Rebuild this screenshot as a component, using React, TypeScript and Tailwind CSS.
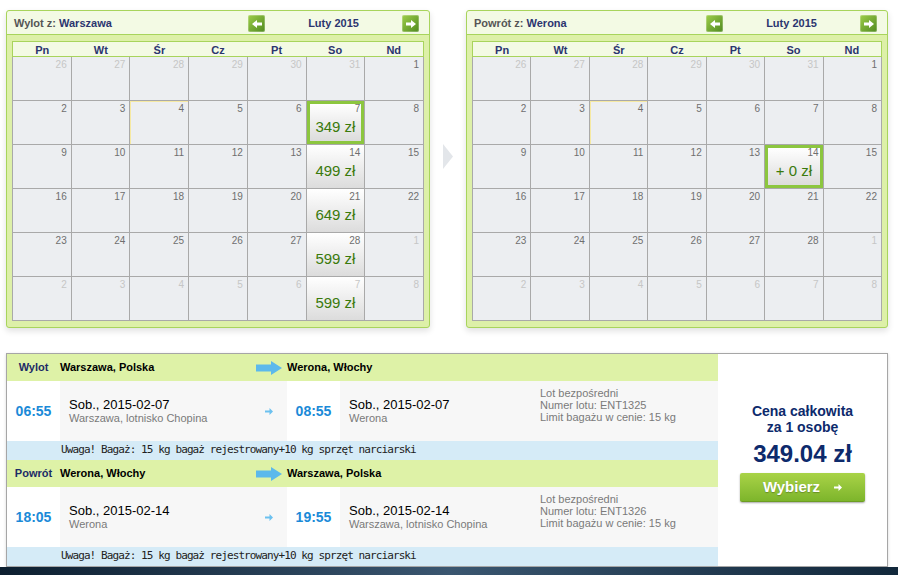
import React from "react";

type Cell = { p?: string; sel?: boolean };

const weeks = [
  [26, 27, 28, 29, 30, 31, 1],
  [2, 3, 4, 5, 6, 7, 8],
  [9, 10, 11, 12, 13, 14, 15],
  [16, 17, 18, 19, 20, 21, 22],
  [23, 24, 25, 26, 27, 28, 1],
  [2, 3, 4, 5, 6, 7, 8],
];

const dayNames = ["Pn", "Wt", "Śr", "Cz", "Pt", "So", "Nd"];

const isOther = (r: number, c: number) => (r === 0 && c < 6) || (r === 4 && c === 6) || r === 5;

function NavButton({ dir }: { dir: "l" | "r" }) {
  return (
    <div className="flex h-[17px] w-[17px] items-center justify-center rounded-[2px] bg-gradient-to-br from-[#9fcf4a] to-[#4f8a1f] shadow-[inset_0_0_0_1px_rgba(255,255,255,0.25)]">
      <svg width="10" height="8" viewBox="0 0 10 8" className={dir === "r" ? "" : "rotate-180"}>
        <path d="M0 2.6h5V0l5 4-5 4V5.4H0z" fill="#fff" />
      </svg>
    </div>
  );
}

function Calendar({
  label,
  city,
  width,
  cells,
}: {
  label: string;
  city: string;
  width: string;
  cells: Record<string, Cell>;
}) {
  return (
    <div className={`${width} h-[318px] rounded-[3px] border border-[#a8d45c] bg-[#ddf0a8] shadow-[0_3px_6px_rgba(0,0,0,0.12)]`}>
      <div className="flex h-[24px] items-center border-b border-[#a8d45c] bg-[#f3fae4] rounded-t-[3px] pt-[2px]">
        <div className="flex-1 pl-[7px] text-[11px] font-bold text-[#555]">
          {label} <span className="text-[#2b356f]">{city}</span>
        </div>
        <div className="mr-[10px] flex w-[171px] items-center">
          <NavButton dir="l" />
          <div className="flex-1 text-center text-[11px] font-bold text-[#2b356f]">Luty 2015</div>
          <NavButton dir="r" />
        </div>
      </div>
      <div className="mx-[5px] mt-[6px]">
        <div className="grid h-[16px] grid-cols-7 items-center border border-[#a8d45c] bg-[#f3fae4]">
          {dayNames.map((d) => (
            <div key={d} className="text-center text-[11px] font-bold text-[#2b356f]">
              {d}
            </div>
          ))}
        </div>
        <div className="grid grid-cols-7 gap-px border-x border-b border-[#a9a9a9] bg-[#a9a9a9]">
          {weeks.map((w, r) =>
            w.map((d, c) => {
              const cell = cells[`${r}-${c}`];
              const other = isOther(r, c);
              const today = r === 1 && c === 2;
              return (
                <div
                  key={`${r}-${c}`}
                  className={`h-[43px] ${
                    cell
                      ? `bg-gradient-to-b from-white to-[#dcdcdc] ${cell.sel ? "border-[3px] border-[#8cc63f]" : ""}`
                      : "bg-[#eceef1]"
                  } ${today ? "shadow-[inset_1px_1px_0_#f6e9a2]" : ""}`}
                >
                  <div
                    className={`pr-[4px] pt-[2px] text-right text-[10px] leading-[12px] ${
                      other ? "text-[#c6c6c6]" : "text-[#6f6f6f]"
                    } ${cell?.sel ? "-mt-[3px] -mr-[3px]" : ""}`}
                  >
                    {d}
                  </div>
                  {cell && (
                    <div className="mt-[3px] text-center text-[15px] leading-[18px] text-[#3a7a0c]">{cell.p}</div>
                  )}
                </div>
              );
            })
          )}
        </div>
      </div>
    </div>
  );
}

function BigArrow() {
  return (
    <svg width="26" height="14" viewBox="0 0 26 14">
      <path d="M0 3.5h15V0l11 7-11 7v-3.5H0z" fill="#5cb9eb" />
    </svg>
  );
}

function SmallArrow() {
  return (
    <svg width="8" height="7" viewBox="0 0 8 7">
      <path d="M0 2.5h4.5V0L8 3.5 4.5 7V4.5H0z" fill="#6cc1ef" />
    </svg>
  );
}

function Leg({
  kind,
  from,
  to,
  dep,
  arr,
  date,
  fromLoc,
  toLoc,
  flight,
}: {
  kind: string;
  from: string;
  to: string;
  dep: string;
  arr: string;
  date: string;
  fromLoc: string;
  toLoc: string;
  flight: string;
}) {
  return (
    <>
      <div className="flex h-[27px] items-center bg-[#def2a7] text-[11px] font-bold">
        <div className="w-[53px] text-center text-[#1c2c66]">{kind}</div>
        <div className="flex w-[227px] items-center justify-between pr-[5px] text-black">
          <span>{from}</span>
          <BigArrow />
        </div>
        <div className="text-black">{to}</div>
      </div>
      <div className="flex h-[60px]">
        <div className="flex w-[53px] items-center justify-center bg-white text-[14px] font-bold text-[#1b8ad8]">{dep}</div>
        <div className="flex w-[227px] items-center justify-between bg-[#f7f7f7] pl-[9px] pr-[14px]">
          <div>
            <div className="text-[13px] leading-[15px] text-black">{date}</div>
            <div className="text-[11px] leading-[13px] text-[#7a7a7a]">{fromLoc}</div>
          </div>
          <SmallArrow />
        </div>
        <div className="flex w-[53px] items-center justify-center bg-white text-[14px] font-bold text-[#1b8ad8]">{arr}</div>
        <div className="flex flex-1 bg-[#f7f7f7] pl-[9px]">
          <div className="flex w-[191px] flex-col justify-center">
            <div className="text-[13px] leading-[15px] text-black">{date}</div>
            <div className="text-[11px] leading-[13px] text-[#7a7a7a]">{toLoc}</div>
          </div>
          <div className="pt-[6px] text-[11px] leading-[12px] text-[#7a7a7a]">
            <div>Lot bezpośredni</div>
            <div>Numer lotu: {flight}</div>
            <div>Limit bagażu w cenie: 15 kg</div>
          </div>
        </div>
      </div>
      <div className="flex h-[19px] items-center bg-[#d5ebf7] pl-[54px] font-['DejaVu_Sans_Mono',monospace] text-[11px] tracking-[-0.9px] text-[#222]">
        Uwaga! Bagaż: 15 kg bagaż rejestrowany+10 kg sprzęt narciarski
      </div>
    </>
  );
}

export default function App() {
  return (
    <div className="relative h-[575px] w-[898px] overflow-hidden bg-white font-['Liberation_Sans',Arial,sans-serif]">
      <div className="flex pl-[6px] pt-[10px]">
        <Calendar
          label="Wylot z:"
          city="Warszawa"
          width="w-[424px]"
          cells={{
            "1-5": { p: "349 zł", sel: true },
            "2-5": { p: "499 zł" },
            "3-5": { p: "649 zł" },
            "4-5": { p: "599 zł" },
            "5-5": { p: "599 zł" },
          }}
        />
        <div className="flex w-[36px] items-center justify-center pb-[26px]">
          <svg width="10" height="25" viewBox="0 0 10 25">
            <path d="M0 0l10 12.5L0 25z" fill="#e3e6ea" />
          </svg>
        </div>
        <Calendar
          label="Powrót z:"
          city="Werona"
          width="w-[422px]"
          cells={{ "2-5": { p: "+ 0 zł", sel: true } }}
        />
      </div>

      <div className="ml-[6px] mt-[25px] flex h-[214px] w-[882px] border border-[#a6a6a6] shadow-[0_1px_3px_rgba(0,0,0,0.15)]">
        <div className="flex w-[711px] flex-col">
          <Leg
            kind="Wylot"
            from="Warszawa, Polska"
            to="Werona, Włochy"
            dep="06:55"
            arr="08:55"
            date="Sob., 2015-02-07"
            fromLoc="Warszawa, lotnisko Chopina"
            toLoc="Werona"
            flight="ENT1325"
          />
          <Leg
            kind="Powrót"
            from="Werona, Włochy"
            to="Warszawa, Polska"
            dep="18:05"
            arr="19:55"
            date="Sob., 2015-02-14"
            fromLoc="Werona"
            toLoc="Warszawa, lotnisko Chopina"
            flight="ENT1326"
          />
        </div>
        <div className="flex flex-1 flex-col items-center bg-white pt-[49px]">
          <div className="text-center text-[14px] font-bold leading-[16px] text-[#0d2a6c]">
            <div>Cena całkowita</div>
            <div>za 1 osobę</div>
          </div>
          <div className="mt-[6px] text-[24px] font-bold leading-[26px] text-[#0d2a6c]">349.04 zł</div>
          <div className="mt-[6px] flex h-[29px] w-[125px] items-center justify-center gap-[14px] rounded-[2px] border-b border-[#6c9d22] bg-gradient-to-b from-[#a9d347] to-[#7db52b] shadow-[0_1px_2px_rgba(0,0,0,0.35)]">
            <span className="text-[15px] font-bold text-white [text-shadow:0_1px_1px_rgba(0,0,0,0.25)]">Wybierz</span>
            <svg width="8" height="7" viewBox="0 0 8 7">
              <path d="M0 2.5h4.5V0L8 3.5 4.5 7V4.5H0z" fill="#fff" />
            </svg>
          </div>
        </div>
      </div>

      <div className="absolute bottom-0 left-0 h-[8px] w-full bg-gradient-to-r from-[#0d1f30] via-[#3a5670] to-[#12283b]" />
    </div>
  );
}
